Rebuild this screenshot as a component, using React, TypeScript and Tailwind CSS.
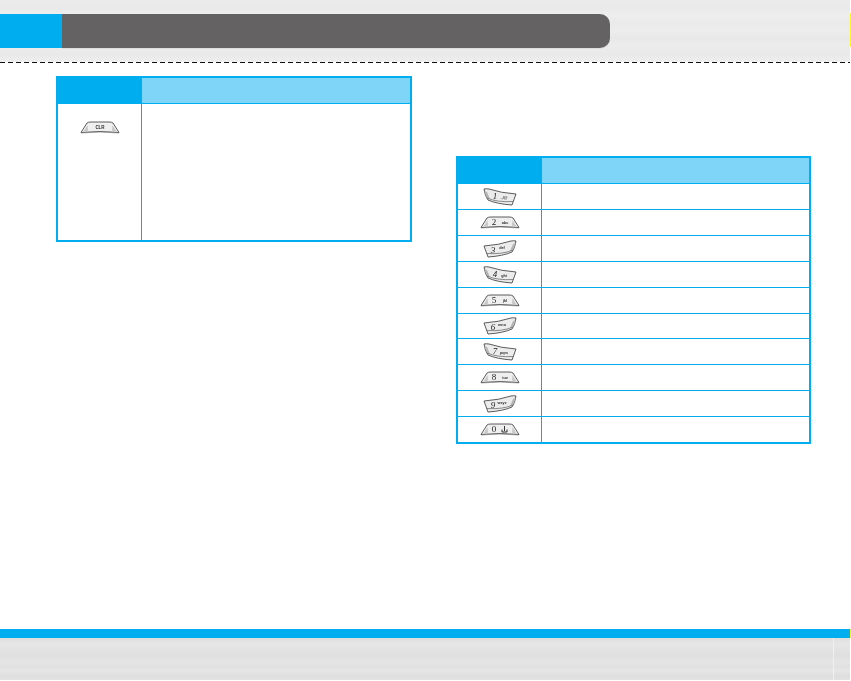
import React from 'react';

type KeyShape = 'flat' | 'left' | 'right';

// Keypad rows of the right hand table. Heights alternate a little, as in the scan.
const keyRows: { shape: KeyShape; num: string; sub: string; height: string }[] = [
  { shape: 'left', num: '1', sub: '.,/@', height: 'h-[26px]' },
  { shape: 'flat', num: '2', sub: 'abc', height: 'h-[26px]' },
  { shape: 'right', num: '3', sub: 'def', height: 'h-[26px]' },
  { shape: 'left', num: '4', sub: 'ghi', height: 'h-[26px]' },
  { shape: 'flat', num: '5', sub: 'jkl', height: 'h-[26px]' },
  { shape: 'right', num: '6', sub: 'mno', height: 'h-[25px]' },
  { shape: 'left', num: '7', sub: 'pqrs', height: 'h-[26px]' },
  { shape: 'flat', num: '8', sub: 'tuv', height: 'h-[26px]' },
  { shape: 'right', num: '9', sub: 'wxyz', height: 'h-[26px]' },
  { shape: 'flat', num: '0', sub: '', height: 'h-[25px]' },
];

const streaks =
  'bg-[linear-gradient(180deg,#ececec_0%,#e9e9e9_12%,#eeeeee_24%,#eaeaea_38%,#ededed_50%,#e8e8e8_62%,#ececec_74%,#e9e9e9_88%,#eeeeee_100%)]';
const footerStreaks =
  'bg-[linear-gradient(180deg,#dedede_0%,#e6e6e6_14%,#e2e2e2_30%,#dfdfdf_42%,#e5e5e5_56%,#e1e1e1_68%,#e6e6e6_78%,#dedede_90%,#e2e2e2_100%)]';

const FlatKey: React.FC<{ children: React.ReactNode }> = ({ children }) => (
  <svg width="40" height="13" viewBox="0 0 40 13" className="block grayscale">
    <path d="M1 11.5 L7 2 Q8 1 11 1 L29 1 Q32 1 33 2 L39 11.5 Q20 9.5 1 11.5 Z" fill="#efefef" stroke="#4a4a4a" strokeWidth="0.9" />
    <path d="M3.5 10.8 L7.5 4 L8 9.8 Q5 10.2 3.5 10.8 Z M36.5 10.8 L32.5 4 L32 9.8 Q35 10.2 36.5 10.8 Z" fill="#c8c8c8" />
    <path d="M1 12 Q20 10 39 12" fill="none" stroke="#808080" strokeWidth="0.6" />
    {children}
  </svg>
);

const CurvedKey: React.FC<{ flip: boolean; num: string; sub: string }> = ({ flip, num, sub }) => (
  <svg width="34" height="18" viewBox="0 0 34 18" className="block grayscale">
    <g transform={flip ? 'translate(34 0) scale(-1 1)' : undefined}>
      <path d="M1 1 Q3 0.5 6 1 Q18 5 33 6 L29 17 Q14 16 5 12 Q2 8 1 1 Z" fill="#ececec" stroke="#4a4a4a" strokeWidth="0.9" />
      <path d="M1.5 3 Q3 10 7 11 L4 4 Z" fill="#b5b5b5" />
      <path d="M4 10 Q14 14.5 30.5 13.5" fill="none" stroke="#6f6f6f" strokeWidth="0.8" />
    </g>
    <text x={flip ? 10 : 12} y={flip ? 12.5 : 10.5} fontSize="9" fontStyle="italic" fontFamily="Liberation Serif, serif" fill="#1c1c1c" textAnchor="middle">{num}</text>
    <text x={flip ? 19 : 21} y={flip ? 8.5 : 10.5} fontSize="3.8" fontFamily="Liberation Sans, sans-serif" fontWeight="bold" fill="#2c2c2c" textAnchor="middle">{sub}</text>
  </svg>
);

const KeyIcon: React.FC<{ shape: KeyShape; num: string; sub: string }> = ({ shape, num, sub }) => {
  if (shape === 'flat') {
    return (
      <FlatKey>
        <text x="14" y="9" fontSize="9" fontFamily="Liberation Serif, serif" fill="#1c1c1c" textAnchor="middle">{num}</text>
        {sub ? (
          <text x="25" y="8" fontSize="3.8" fontFamily="Liberation Sans, sans-serif" fontWeight="bold" fill="#2c2c2c" textAnchor="middle">{sub}</text>
        ) : (
          <path d="M22 9 L27 9 M22 9 L22 6.5 M27 9 L27 6.5 M24.5 8 L24.5 3" fill="none" stroke="#1c1c1c" strokeWidth="0.9" />
        )}
      </FlatKey>
    );
  }
  return <CurvedKey flip={shape === 'right'} num={num} sub={sub} />;
};

const TableHead: React.FC = () => (
  <div className="flex h-[26px] border-b border-[#00aeef]">
    <div className="w-[84px] bg-[#00aeef]" />
    <div className="flex-1 bg-[#7fd5f8]" />
  </div>
);

const App: React.FC = () => {
  return (
    <div className="flex h-[681px] w-[851px] flex-col overflow-hidden bg-white font-['Liberation_Sans',sans-serif]">
      {/* Top band with the chapter bar */}
      <div className="flex">
        <div className={`flex h-[62px] w-[850px] items-start pt-[14px] ${streaks}`}>
          <div className="h-[34px] w-[62px] bg-[#00aeef]" />
          <div className="h-[34px] w-[548px] rounded-r-[10px] bg-[#656263] shadow-[0_1px_0_#dcdcdc]" />
        </div>
        <div className="mt-[13px] h-[34px] w-px bg-[#ffff00]" />
      </div>
      <div className="h-px w-[850px] bg-[repeating-linear-gradient(90deg,#111111_0_5px,transparent_5px_8px)]" />

      {/* Two tables */}
      <div className="flex flex-1 items-start">
        <div className="ml-[56px] mt-[13px] h-[166px] w-[356px] border-2 border-[#00aeef]">
          <TableHead />
          <div className="flex h-[136px]">
            <div className="flex w-[84px] justify-center border-r border-[#00aeef] pt-[17px]">
              <FlatKey>
                <text x="20" y="8" fontSize="4.5" fontFamily="Liberation Sans, sans-serif" fontWeight="bold" fill="#2c2c2c" textAnchor="middle">CLR</text>
              </FlatKey>
            </div>
            <div className="flex-1" />
          </div>
        </div>

        <div className="ml-[44px] mt-[93px] h-[288px] w-[355px] border-2 border-[#00aeef]">
          <TableHead />
          {keyRows.map((row, i) => (
            <div
              key={row.num}
              className={`flex ${row.height} ${i < keyRows.length - 1 ? 'border-b border-[#00aeef]' : ''}`}
            >
              <div className="flex w-[84px] items-center justify-center border-r border-[#00aeef]">
                <KeyIcon shape={row.shape} num={row.num} sub={row.sub} />
              </div>
              <div className="flex-1" />
            </div>
          ))}
        </div>
      </div>

      {/* Bottom band */}
      <div className="flex">
        <div className="h-[9px] w-[850px] bg-[#00aeef]" />
        <div className="h-[9px] w-px bg-[#ffff00]" />
      </div>
      <div className={`relative h-[42px] w-[850px] ${footerStreaks}`}>
        <div className="absolute bottom-0 left-[833px] top-0 w-px bg-[#f0f0f0]" />
      </div>
      <div className="h-px" />
    </div>
  );
};

export default App;
